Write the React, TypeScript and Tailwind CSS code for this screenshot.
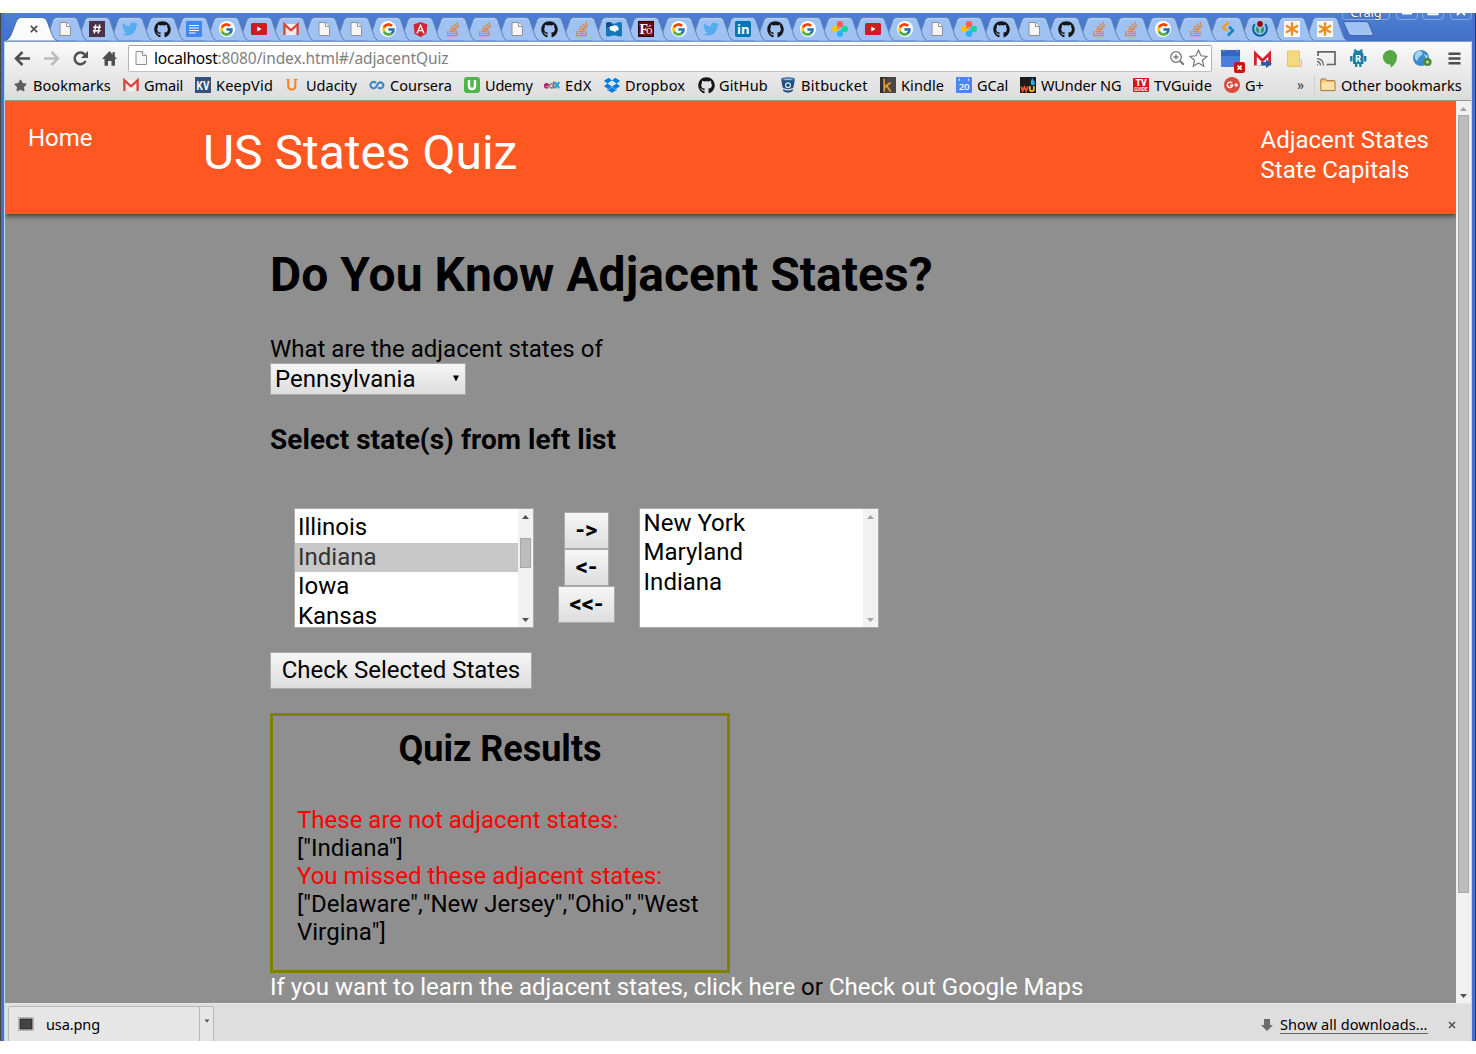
import type { ReactNode } from "react";
import { FaGithub, FaTwitter, FaAngular, FaStar } from "react-icons/fa";
import { FcGoogle } from "react-icons/fc";

/* ---------- favicons ---------- */

const DocIcon = () => (
  <svg width="16" height="16" viewBox="0 0 16 16">
    <path d="M3 1.5H9.5L13.5 5.5V14.5H3Z" fill="#f6f6f6" stroke="#8f8f8f" />
    <path d="M9.5 1.5V5.5H13.5" fill="#fff" stroke="#8f8f8f" />
  </svg>
);
const HashIcon = () => (
  <svg width="16" height="16" viewBox="0 0 16 16">
    <rect width="16" height="16" fill="#4b3245" />
    <path d="M6.7 3.5 5.3 12.5M10.6 3.5 9.2 12.5M4.2 6.3H12M3.8 9.8H11.6" stroke="#fff" strokeWidth="1.5" fill="none" />
  </svg>
);
const TwitterIcon = () => <FaTwitter size={16} color="#55acee" />;
const GithubIcon = () => <FaGithub size={17} color="#171515" className="shrink-0" />;
const GDocsIcon = () => (
  <svg width="16" height="16" viewBox="0 0 16 16">
    <rect width="16" height="16" rx="1" fill="#4285f4" />
    <path d="M3 4.5H13M3 7H13M3 9.5H13M3 12H9.5" stroke="#fff" strokeWidth="1.1" />
  </svg>
);
const GoogleIcon = () => (
  <span className="flex size-4 items-center justify-center rounded-full bg-white">
    <FcGoogle size={15} />
  </span>
);
const YoutubeIcon = () => (
  <svg width="16" height="16" viewBox="0 0 16 16">
    <rect y="2" width="16" height="12" rx="1.6" fill="#cc1d22" />
    <path d="M6.3 5.6 10.6 8 6.3 10.4Z" fill="#fff" />
  </svg>
);
const GmailIcon = () => (
  <svg width="16" height="16" viewBox="0 0 16 16">
    <path d="M1 3H15V14H1Z" fill="#f2f0ee" />
    <path d="M3 13.5 7 9M13 13.5 9 9" stroke="#ccc" strokeWidth="0.8" />
    <path d="M1.4 14V3.4L8 9.3 14.6 3.4V14" fill="none" stroke="#d7443a" strokeWidth="2.3" />
  </svg>
);
const AngularIcon = () => <FaAngular size={17} color="#d02634" className="bg-[radial-gradient(circle,#fff_45%,transparent_46%)]" />;
const StackIcon = () => (
  <svg width="16" height="16" viewBox="0 0 16 16">
    <path d="M2.8 10V14.6H12V10" fill="none" stroke="#b58a6c" strokeWidth="1.2" />
    <path d="M4.6 12.5H10.4M4.6 10.4 10.5 11M5 7.9 10.7 9.5M6.2 5.2 11.3 8.4M8.8 2.6 12.3 7.4M12 .8 13.4 6.4" stroke="#ea7c26" strokeWidth="1.2" fill="none" />
  </svg>
);
const PuzzleIcon = () => (
  <svg width="16" height="16" viewBox="0 0 16 16">
    <path d="M0 2Q4 0 6 2.5H10Q13 0 16 2V15Q13 16 10 14.5H6Q3 16 0 15Z" fill="#1478b8" />
    <path d="M0 2Q4 0 6 2.5V5L0 7Z" fill="#0c4f8c" />
    <path d="M3.5 7Q4 4.5 6.5 5.3Q9 3 11.5 5.3Q13.5 7 12.3 9.6H10.3L8.7 11.5 7.7 9.9Q3.5 10 3.5 7Z" fill="#fff" />
  </svg>
);
const FoIcon = () => (
  <svg width="16" height="16" viewBox="0 0 16 16">
    <rect width="16" height="16" fill="#6d0a12" />
    <rect x=".5" y=".5" width="15" height="15" fill="none" stroke="#2c0205" />
    <text x="1.5" y="13" fontFamily="Liberation Serif, serif" fontWeight="700" fontSize="14" fill="#fff">F</text>
    <text x="8" y="13" fontFamily="Liberation Serif, serif" fontSize="13" fill="#fbe9e9">ó</text>
  </svg>
);
const LinkedinIcon = () => (
  <span className="flex size-4 items-center justify-center rounded-[2px] bg-[#0077b5] font-['Open_Sans',sans-serif] text-[13px] leading-4 font-bold text-white">in</span>
);
const FlowerIcon = () => (
  <svg width="16" height="16" viewBox="0 0 16 16">
    <circle cx="8" cy="3.2" r="3.2" fill="#ff5e4b" />
    <circle cx="3.2" cy="8" r="3.2" fill="#fbc20e" />
    <circle cx="12.8" cy="8" r="3.2" fill="#12d69b" />
    <circle cx="8" cy="12.8" r="3.2" fill="#2bb3f7" />
    <path d="M5 5.2H8V8ZM5 5.2V8H8Z" fill="#ff8a30" />
    <path d="M8 8H11V11L8 8V12Z" fill="#19bfcf" />
  </svg>
);
const ArrowsIcon = () => (
  <svg width="16" height="16" viewBox="0 0 16 16" fill="none" strokeWidth="2.6">
    <path d="M8.5 1.5 3.2 6.2 6.8 9.8" stroke="#f09d2b" />
    <path d="M9.2 5.6 12.9 9.6 7.8 14.5" stroke="#1486b8" />
  </svg>
);
const WikimediaIcon = () => (
  <svg width="16" height="16" viewBox="0 0 16 16" fill="none">
    <circle cx="8" cy="2.9" r="2.8" fill="#900" />
    <path d="M2.8 3.2A6.9 6.9 0 1 0 13.2 3.2" stroke="#069" strokeWidth="2" />
    <path d="M5 5.3A4.1 4.1 0 0 0 7.2 12.3V8.3ZM11 5.3A4.1 4.1 0 0 1 8.8 12.3V8.3Z" fill="#396" />
  </svg>
);
const AsteriskIcon = () => (
  <svg width="16" height="16" viewBox="0 0 16 16">
    <rect width="16" height="16" fill="#fdf6ec" />
    <path d="M8 1.2V14.8M2 4.6 14 11.4M14 4.6 2 11.4" stroke="#ea8d24" strokeWidth="2.3" />
  </svg>
);

const tabs: (() => ReactNode)[] = [
  DocIcon, HashIcon, TwitterIcon, GithubIcon, GDocsIcon, GoogleIcon, YoutubeIcon, GmailIcon, DocIcon, DocIcon,
  GoogleIcon, AngularIcon, StackIcon, StackIcon, DocIcon, GithubIcon, StackIcon, PuzzleIcon, FoIcon, GoogleIcon,
  TwitterIcon, LinkedinIcon, GithubIcon, GoogleIcon, FlowerIcon, YoutubeIcon, GoogleIcon, DocIcon, FlowerIcon, GithubIcon,
  DocIcon, GithubIcon, StackIcon, StackIcon, GoogleIcon, StackIcon, ArrowsIcon, WikimediaIcon, AsteriskIcon, AsteriskIcon,
];

/* ---------- bookmark icons ---------- */

const KvIcon = () => (
  <svg width="16" height="16" viewBox="0 0 16 16">
    <rect width="16" height="16" fill="#34517f" />
    <text x="1.5" y="12.8" fontFamily="Roboto, sans-serif" fontWeight="700" fontSize="13.5" textLength="13" lengthAdjust="spacingAndGlyphs" fill="#fff">KV</text>
  </svg>
);
const UdacityIcon = () => (
  <svg width="16" height="16" viewBox="0 0 16 16" fill="none" stroke="#f58220">
    <path d="M3.2 2.2V8.5Q3.2 12.6 6.8 12.6Q10.4 12.6 10.4 8.5V2.2" strokeWidth="2" />
    <path d="M1.6 2.6H4.2M8.8 2.6H12.6" strokeWidth="1.3" />
  </svg>
);
const CourseraIcon = () => (
  <svg width="16" height="16" viewBox="0 0 16 16" fill="none" stroke="#3f86c6" strokeWidth="2.1">
    <path d="M6.9 6A3.2 3 0 1 0 6.9 10.2L9.1 6.4A3 3 0 1 1 9.1 10.3" />
  </svg>
);
const UdemyIcon = () => (
  <svg width="16" height="16" viewBox="0 0 16 16">
    <rect width="16" height="16" rx="3" fill="#4cb648" />
    <path d="M5 3V8.5Q5 12 8 12Q11 12 11 8.5V3" fill="none" stroke="#fff" strokeWidth="2.4" />
  </svg>
);
const EdxIcon = () => (
  <svg width="16" height="16" viewBox="0 0 16 16" fill="none" strokeWidth="1.7">
    <path d="M1 8.4H4.5A2 2 0 1 0 4 10.2" stroke="#b52567" />
    <circle cx="7.5" cy="8.8" r="2" stroke="#9a8c93" />
    <path d="M9.7 4.5V11.5" stroke="#777" />
    <path d="M10.8 5 15.2 11.3M15.2 5 10.8 11.3" stroke="#1e9bd8" strokeWidth="2" />
  </svg>
);
const DropboxIcon = () => (
  <svg width="16" height="16" viewBox="0 0 16 16" fill="#007ee5">
    <path d="M4.7 .8 8 3.5 3.3 6.4 0 3.8ZM11.3 .8 16 3.8 12.7 6.4 8 3.5ZM3.3 6.6 8 9.4 4.7 12.2 0 9.2ZM12.7 6.6 16 9.2 11.3 12.2 8 9.4Z" />
    <path d="M8 10.1 11.3 12.8 12.7 11.9V13L8 15.8 3.3 13V11.9L4.7 12.8Z" />
  </svg>
);
const BucketIcon = () => (
  <svg width="16" height="16" viewBox="0 0 16 16">
    <path d="M1.2 2.4Q8 5.3 14.8 2.4L13.4 10.5Q8 13.8 2.6 10.5Z" fill="#205081" />
    <ellipse cx="8" cy="2.2" rx="6.8" ry="1.9" fill="#2c639b" />
    <ellipse cx="8" cy="2.3" rx="5" ry="0.8" fill="#9eb7d0" />
    <path d="M3 12Q8 15 13 12L12.6 14.3Q8 17.2 3.4 14.3Z" fill="#205081" />
    <circle cx="8" cy="8.2" r="2.4" fill="none" stroke="#e0e6ee" strokeWidth="1.2" />
  </svg>
);
const KindleIcon = () => (
  <svg width="16" height="16" viewBox="0 0 16 16">
    <rect width="16" height="16" fill="#4a4845" />
    <path d="M0 0H7L3 16H0Z" fill="#312f2e" />
    <path d="M4.2 1.5V14.5M10.6 5.5 4.8 10M6.6 9 10.8 14.5" stroke="#ef9a36" strokeWidth="1.7" fill="none" />
  </svg>
);
const GcalIcon = () => (
  <svg width="16" height="16" viewBox="0 0 16 16">
    <rect width="16" height="16" rx="1" fill="#4a86f0" />
    <path d="M3.3 1.7V3.8M12.6 1.7V3.8" stroke="#dfe9fb" strokeWidth="1.4" />
    <text x="8" y="13" textAnchor="middle" fontFamily="Open Sans, sans-serif" fontWeight="600" fontSize="9.5" fill="#fff">20</text>
  </svg>
);
const WunderIcon = () => (
  <svg width="16" height="16" viewBox="0 0 16 16">
    <rect width="16" height="16" fill="#1b1b1d" />
    <path d="M1 9.5 2.6 14 4.4 10 6.2 14 7.8 9.5" stroke="#f0522b" strokeWidth="1.8" fill="none" />
    <path d="M9.8 9V12.2Q9.8 14 11.8 14Q13.8 14 13.8 12.2V9" stroke="#f6b922" strokeWidth="1.8" fill="none" />
    <path d="M12.2 1Q15 5 15 6A2.2 2.2 0 0 1 10.6 6Q10.6 4.5 12.2 1Z" fill="#2aaae0" />
  </svg>
);
const TvIcon = () => (
  <svg width="16" height="16" viewBox="0 0 16 16">
    <rect width="16" height="14" y="1" rx="1" fill="#d8131c" />
    <text x="2.4" y="9.2" fontFamily="Roboto, sans-serif" fontWeight="900" fontSize="9.5" textLength="11.5" lengthAdjust="spacingAndGlyphs" fill="#fff">TV</text>
    <text x="1.2" y="13.8" fontFamily="Roboto, sans-serif" fontWeight="700" fontSize="4.6" textLength="13.6" lengthAdjust="spacingAndGlyphs" fill="#fff">GUIDE</text>
  </svg>
);
const GplusIcon = () => (
  <svg width="16" height="16" viewBox="0 0 16 16">
    <circle cx="8" cy="8" r="8" fill="#dc4a3d" />
    <path d="M8.2 6.2A2.7 2.7 0 1 0 8.7 8.2H6.2M10.4 8H14M12.2 6.2V9.8" stroke="#fff" strokeWidth="1.4" fill="none" />
  </svg>
);
const FolderIcon = () => (
  <svg width="16" height="16" viewBox="0 0 16 16">
    <path d="M.8 13.6V2.9Q.8 1.9 1.8 1.9H5.4Q6.4 1.9 6.4 3.6H14Q15 3.6 15 4.6V13.6Z" fill="#f4c77c" stroke="#a8763a" />
    <path d="M1.5 12.9V6Q1.5 5.4 2.3 5.4H14.3V12.9Z" fill="#fce0a8" />
  </svg>
);

const bookmarks: { label: string; cell: string; Icon: () => ReactNode }[] = [
  { label: "Bookmarks", cell: "w-[111px] tracking-[0.08px]", Icon: () => <FaStar size={13} color="#5f5f5f" /> },
  { label: "Gmail", cell: "w-[72px] tracking-[-0.1px]", Icon: GmailIcon },
  { label: "KeepVid", cell: "w-[90px] tracking-[0.2px]", Icon: KvIcon },
  { label: "Udacity", cell: "w-[84px]", Icon: UdacityIcon },
  { label: "Coursera", cell: "w-[95px]", Icon: CourseraIcon },
  { label: "Udemy", cell: "w-[80px] tracking-[-0.2px]", Icon: UdemyIcon },
  { label: "EdX", cell: "w-[60px] tracking-[0.5px]", Icon: EdxIcon },
  { label: "Dropbox", cell: "w-[94px] tracking-[0.15px]", Icon: DropboxIcon },
  { label: "GitHub", cell: "w-[82px] tracking-[0.1px]", Icon: GithubIcon },
  { label: "Bitbucket", cell: "w-[100px] tracking-[0.25px]", Icon: BucketIcon },
  { label: "Kindle", cell: "w-[76px] tracking-[0.1px]", Icon: KindleIcon },
  { label: "GCal", cell: "w-[64px] tracking-[-0.1px]", Icon: GcalIcon },
  { label: "WUnder NG", cell: "w-[113px] tracking-[-0.12px]", Icon: WunderIcon },
  { label: "TVGuide", cell: "w-[91px] tracking-[0.15px]", Icon: TvIcon },
  { label: "G+", cell: "w-[60px]", Icon: GplusIcon },
];

/* ---------- browser chrome ---------- */

function TabShape({ z }: { z: number }) {
  return (
    <svg className="absolute -left-2 top-[4px]" style={{ zIndex: z }} width="49" height="24" viewBox="0 0 49 24">
      <path d="M2.5 23.5Q5 22.5 6.2 19.5L11.6 4Q12.8 .6 15.5 .6H33Q35.8 .6 37 4L42.3 19.5Q43.5 22.5 46 23.5Z" fill="#9fc2f3" />
      <path d="M2.5 23.5Q5 22.5 6.2 19.5L11.6 4Q12.8 .6 15.5 .6H33Q35.8 .6 37 4L42.3 19.5Q43.5 22.5 46 23.5" fill="none" stroke="#6284b4" />
      <path d="M12.8 4Q13.8 1.7 15.8 1.7H32.8Q34.8 1.7 35.8 4" fill="none" stroke="#bdd6f8" />
    </svg>
  );
}

function TabStrip() {
  return (
    <div className="relative flex h-7 overflow-hidden bg-linear-to-b from-[#4f80d2] to-[#4270c8] pl-[1px]">
      <div className="relative z-50 w-[44px] shrink-0">
        <svg className="absolute top-[4px] -left-[1px]" width="56" height="24" viewBox="0 0 56 24">
          <path d="M0 24Q5 23 7 18L12.5 4Q14 .5 17 .5H38Q41.5 .5 43 4L48.5 19Q50 23 54 24Z" fill="#fbfbfb" stroke="#3f62a5" strokeWidth="0.8" />
          <path d="M26.8 8.8 33.2 15.2M33.2 8.8 26.8 15.2" stroke="#555" strokeWidth="1.8" />
        </svg>
      </div>
      {tabs.map((Icon, i) => (
        <div key={i} className="relative w-[32.31px] shrink-0">
          <TabShape z={40 - i} />
          <div className="relative z-50 flex h-8 items-center justify-center">
            <Icon />
          </div>
        </div>
      ))}
      <svg className="absolute top-[8px] left-[1338px]" width="34" height="16" viewBox="0 0 34 16">
        <path d="M3 .6H24Q26 .6 27 3L31 13Q31.6 14.6 30 14.6H10Q7.5 14.6 6.6 12.6L2 2.5Q1.3 .6 3 .6Z" fill="#9fc2f3" stroke="#3c60a6" />
      </svg>
      <div className="absolute top-0 left-[1338px] flex h-[8px] overflow-hidden text-white">
        <div className="-mt-3 h-[19px] w-[48px] rounded-b border border-[#86a8e0] text-center font-['Noto_Sans',sans-serif] text-[13px] leading-[21px] tracking-[-0.1px] [text-shadow:0_0_2px_#123]">Craig</div>
        {[
          <path key="min" d="M6 1.5H16" />,
          <path key="max" d="M6.5 -4V2.2H15.5V-4" />,
          <path key="cls" d="M7 3 11 -1 15 3" />,
        ].map((d, i) => (
          <div key={i} className="-mt-3 ml-[6px] flex h-[19px] w-[22px] items-end justify-center rounded-b border border-[#86a8e0] odd:ml-[4px]">
            <svg width="20" height="7" viewBox="1 0 20 7" fill="none" stroke="#fff" strokeWidth="2">{d}</svg>
          </div>
        ))}
      </div>
    </div>
  );
}

function Toolbar() {
  return (
    <div className="flex h-[33px] items-center bg-linear-to-b from-[#fafafa] to-[#e8e8e8]">
      <svg className="shrink-0" width="123" height="32" viewBox="5 42 123 32" fill="none" stroke="#505050" strokeWidth="2.5">
        <path d="M30 58.5H17M22.5 52 16 58.5 22.5 65" />
        <path d="M44 58.5H57M51.5 52 58 58.5 51.5 65" stroke="#bdbdbd" />
        <path d="M85.6 61A5.8 5.8 0 1 1 84.8 54.6" />
        <path d="M88 51V58H81Z" fill="#505050" stroke="none" />
        <path d="M109.5 51 102 59H104.5V65.8H108V61H111.5V65.8H115V59H117L114.8 56.7V52H112.6V54.4Z" fill="#505050" stroke="none" />
      </svg>
      <div className="flex h-[27px] w-[1084px] shrink-0 items-center rounded-[2px] border border-t-[#a0a0a0] border-x-[#b4b4b4] border-b-[#c0c0c0] bg-white pl-[4px]">
        <DocIcon />
        <div className="ml-[5px] pb-px font-['Noto_Sans',sans-serif] text-[15.5px] leading-6 tracking-[-0.1px] text-[#808080]">
          <span className="tracking-[-0.22px] text-black">localhost</span>:8080/index.html#/adjacentQuiz
        </div>
        <svg className="ml-auto mr-[2px]" width="40" height="20" viewBox="0 0 40 20" fill="none" stroke="#777" strokeWidth="1.3">
          <circle cx="7" cy="9" r="5.3" />
          <path d="M4.5 9H9.5M7 6.5V11.5" />
          <path d="M11 13 14.8 16.8" strokeWidth="2" />
          <path d="M29.5 2.2 32 7.8 38 8.4 33.4 12.3 34.8 18.2 29.5 15 24.2 18.2 25.6 12.3 21 8.4 27 7.8Z" strokeWidth="1.2" />
        </svg>
      </div>
      <svg className="shrink-0" width="259" height="32" viewBox="1212 42 259 32" fill="none">
        <rect x="1221" y="50" width="19" height="17" rx="1" fill="#4a7ddc" />
        <rect x="1221" y="50" width="19" height="6" fill="#3863bf" />
        <path d="M1224 49V52M1237 49V52" stroke="#8fa9dc" />
        <rect x="1234" y="62" width="11" height="11" rx="2" fill="#d01313" />
        <path d="M1237.6 65.6 1241.6 69.6M1241.6 65.6 1237.6 69.6" stroke="#fff" strokeWidth="1.5" />
        <path d="M1254 52H1271V66H1254Z" fill="#fff" />
        <path d="M1255.4 66V53.5L1262.5 60.5 1269.6 53.5V66" stroke="#d3232d" strokeWidth="2.8" />
        <path d="M1254.5 65.5H1270.5" stroke="#c8c8c8" />
        <path d="M1261 62H1266V59.5L1272 63.7 1266 68V65.5H1261Z" fill="#2b5bad" />
        <path d="M1287.5 51H1299.5V66H1287.5Z" fill="#f5d97f" stroke="#ecc65c" />
        <path d="M1299.5 60H1301.5V66.5H1288" stroke="#e7c66a" strokeWidth="1.2" />
        <path d="M1318 56V51.9H1335V64.5H1326.5" stroke="#666" strokeWidth="1.7" />
        <path d="M1317 58.7Q1323 58.7 1323.5 65.5M1317 61.5Q1320 61.5 1320.5 65.5M1317 64.8H1318" stroke="#666" strokeWidth="1.3" />
        <path d="M1353 54.4A5.3 4.6 0 0 1 1363.5 54.4Z" fill="#1b7fa8" />
        <path d="M1353 54H1363.5V64H1361.5V67H1359.2V64H1357.3V67H1355V64H1353Z" fill="#1b7fa8" />
        <path d="M1351.3 56V61.5M1365.2 56V61.5M1354.5 49.5 1356 52M1362 49.5 1360.5 52" stroke="#1b7fa8" strokeWidth="2.4" />
        <text x="1358.2" y="62.4" textAnchor="middle" fontFamily="Roboto, sans-serif" fontWeight="700" fontSize="9" fill="#fff">R</text>
        <path d="M1390 50A7 7 0 0 1 1397 57.5Q1396.5 64 1390.5 67.8V64.6A7.2 7.2 0 0 1 1390 50Z" fill="#55a743" />
        <circle cx="1421" cy="58" r="8" fill="#3d8bd0" />
        <path d="M1415 54Q1418 50 1421 51L1423 54 1419 57 1417 61Q1414 59 1415 54ZM1424 54 1428 56 1426 59Z" fill="#a7d3f3" />
        <circle cx="1427.5" cy="62" r="2.8" fill="#c7dfb9" stroke="#4e8a35" strokeWidth="2.6" />
        <path d="M1448.5 53.8H1460.5M1448.5 58.5H1460.5M1448.5 63.2H1460.5" stroke="#4d4d4d" strokeWidth="2.6" />
      </svg>
    </div>
  );
}

function BookmarkBar() {
  return (
    <div className="flex h-[26px] items-center border-b border-[#979797] bg-linear-to-b from-[#e8e8e8] to-[#dcdcdc] pb-[5px] pl-[7px] font-['Noto_Sans',sans-serif] text-[14.5px] leading-5 whitespace-nowrap text-black">
      {bookmarks.map(({ label, cell, Icon }) => (
        <div key={label} className={`flex shrink-0 items-center gap-[5px] ${cell}`}>
          <span className="mt-px flex size-4 shrink-0 items-center justify-center">
            <Icon />
          </span>
          <span>{label}</span>
        </div>
      ))}
      <span className="w-[30px] shrink-0 pl-[13px] text-[14px] text-[#444]">»</span>
      <span className="h-5 w-px shrink-0 bg-[#d0d0d0]" />
      <span className="ml-[5px] flex items-center gap-[5px]">
        <FolderIcon />
        <span className="tracking-[0.05px]">Other bookmarks</span>
      </span>
    </div>
  );
}

/* ---------- page ---------- */

const btn = "border border-[#a9a9a9] bg-linear-to-b from-[#f6f6f6] to-[#dddddd] text-black";

function ListBox({ items, selected, offset, active }: { items: string[]; selected?: string; offset: string; active: boolean }) {
  const arrow = active ? "#505050" : "#a3a3a3";
  return (
    <div className="flex h-[120px] w-[240px] border border-[#a9a9a9] bg-white">
      <div className="flex-1 overflow-hidden">
        <div className={offset}>
          {items.map((s) => (
            <div key={s} className={`h-[29.5px] pl-[3px] leading-[28px] ${s === selected ? "bg-[#c8c8c8] text-[#323232]" : ""}`}>{s}</div>
          ))}
        </div>
      </div>
      <div className="flex w-[15px] flex-col items-center justify-between bg-[#f1f1f1]">
        <svg width="15" height="15" viewBox="0 0 15 15"><path d="M7.5 6 11 10H4Z" fill={arrow} /></svg>
        {active && <div className="mb-[30px] h-[30px] w-[11px] border border-[#a8a8a8] bg-[#bcbcbc]" />}
        <svg width="15" height="15" viewBox="0 0 15 15"><path d="M4 6H11L7.5 10Z" fill={arrow} /></svg>
      </div>
    </div>
  );
}

function Page() {
  return (
    <div className="flex flex-1 flex-col overflow-hidden bg-[#8f8f8f] font-[Roboto,sans-serif] text-[24px] leading-[28px] text-black">
      <header className="flex h-[113px] shrink-0 bg-[#ff5722] pl-[23px] text-white shadow-[0_2px_5px_rgba(0,0,0,0.6)]">
        <a className="mt-[23px] w-[175px]">Home</a>
        <div className="mt-[24px] text-[48px] leading-[56px] tracking-[-0.02px]">US States Quiz</div>
        <nav className="mt-[24px] mr-[27px] ml-auto flex flex-col leading-[30px]">
          <a>Adjacent States</a>
          <a>State Capitals</a>
        </nav>
      </header>
      <main className="flex flex-col items-start pl-[265px] whitespace-nowrap">
        <h1 className="mt-[33px] text-[48px] leading-[56px] font-bold tracking-[0.04px]">Do You Know Adjacent States?</h1>
        <p className="mt-[32px]">What are the adjacent states of</p>
        <div className={`flex h-[32px] w-[196px] items-center justify-between pr-[5px] pl-[4px] ${btn}`}>
          Pennsylvania
          <svg width="8" height="7" viewBox="0 0 8 7"><path d="M1 .5H7L4 6.5Z" fill="#000" /></svg>
        </div>
        <h3 className="mt-[29px] text-[28px] leading-[32px] font-bold tracking-[0.04px]">Select state(s) from left list</h3>
        <div className="mt-[52px] ml-[24px] flex">
          <ListBox items={["Illinois", "Indiana", "Iowa", "Kansas"]} selected="Indiana" offset="pt-[4.5px]" active />
          <div className="mt-[4px] mr-[24px] ml-[24px] flex w-[57px] flex-col items-center font-bold">
            <button className={`h-[37px] w-[45px] ${btn}`}>-&gt;</button>
            <button className={`h-[37px] w-[45px] ${btn}`}>&lt;-</button>
            <button className={`h-[37px] w-[57px] ${btn}`}>&lt;&lt;-</button>
          </div>
          <ListBox items={["New York", "Maryland", "Indiana"]} offset="pl-[0.6px]" active={false} />
        </div>
        <button className={`mt-[24px] h-[37px] w-[262px] pb-px ${btn}`}>Check Selected States</button>
        <section className="mt-[24px] h-[260px] w-[460px] border-3 border-[#808000] px-[24px] pt-[12px]">
          <h2 className="text-center text-[36px] leading-[42px] font-bold">Quiz Results</h2>
          <div className="mt-[36px]">
            <p className="text-[#ff0000]">These are not adjacent states:</p>
            <p>["Indiana"]</p>
            <p className="text-[#ff0000]">You missed these adjacent states:</p>
            <p className="[font-kerning:none]">["Delaware","New Jersey","Ohio","West<br />Virgina"]</p>
          </div>
        </section>
        <p>
          <a className="text-white">If you want to learn the adjacent states, click here</a> or <a className="text-white">Check out Google Maps</a>
        </p>
      </main>
    </div>
  );
}

function DownloadBar() {
  return (
    <div className="flex h-[39px] border-t border-[#e6e6e6] bg-[#dedede] font-['Noto_Sans',sans-serif] text-[14.5px] text-black">
      <div className="mt-[2px] ml-[3px] flex w-[206px] rounded-t-[2px] border border-b-0 border-[#b8b8b8] bg-[#e6e6e6]">
        <div className="flex flex-1 items-center border-r border-[#b8b8b8] pl-[9px]">
          <svg width="16" height="14" viewBox="0 0 16 14">
            <rect x=".5" y=".5" width="15" height="13" fill="#fafafa" stroke="#b5b5b5" />
            <rect x="2" y="2" width="12" height="10" fill="#444" stroke="#222" />
          </svg>
          <span className="ml-[12px] pt-[3px] tracking-[-0.1px]">usa.png</span>
        </div>
        <div className="flex w-[13px] justify-center pt-[12px]">
          <svg width="6" height="4" viewBox="0 0 6 4"><path d="M.5 .5H5.5L3 3.5Z" fill="#555" /></svg>
        </div>
      </div>
      <div className="mr-[15px] ml-auto flex items-center pt-[5px]">
        <svg width="12" height="12" viewBox="0 0 12 12"><path d="M3 0H9V6H12L6 12 0 6H3Z" fill="#6b6b6b" /></svg>
        <span className="ml-[7px] w-[148px] border-b border-[#666] leading-[17px] tracking-[0.08px] whitespace-nowrap">Show all downloads...</span>
        <svg className="ml-[20px]" width="8" height="8" viewBox="0 0 8 8"><path d="M1 1 7 7M7 1 1 7" stroke="#555" strokeWidth="1.6" /></svg>
      </div>
    </div>
  );
}

export default function App() {
  return (
    <div className="flex h-[1054px] w-[1476px] flex-col overflow-hidden bg-white py-[13px]">
      <div className="flex h-[1028px]">
        <div className="w-[4px] shrink-0 border-l border-[#454545] bg-[#4472c8]" />
        <div className="flex w-[1468px] shrink-0 flex-col">
          <TabStrip />
          <div className="flex flex-1 flex-col overflow-hidden border-x border-t border-[#c5d3ea] border-t-[#7d9cc9]">
            <Toolbar />
            <BookmarkBar />
            <div className="flex h-[902px] shrink-0">
              <Page />
              <div className="flex w-[15px] flex-col items-center bg-[#f1f1f1]">
                <svg width="15" height="14" viewBox="0 0 15 14"><path d="M7.5 6 11 10H4Z" fill="#a3a3a3" /></svg>
                <div className="h-[778px] w-[11px] border border-[#a8a8a8] bg-[#bcbcbc]" />
                <svg className="mt-auto" width="15" height="14" viewBox="0 0 15 14"><path d="M4 5H11L7.5 9Z" fill="#505050" /></svg>
              </div>
            </div>
            <DownloadBar />
          </div>
        </div>
        <div className="flex-1 border-r border-[#2d3a55] bg-[#4472c8]" />
      </div>
    </div>
  );
}
